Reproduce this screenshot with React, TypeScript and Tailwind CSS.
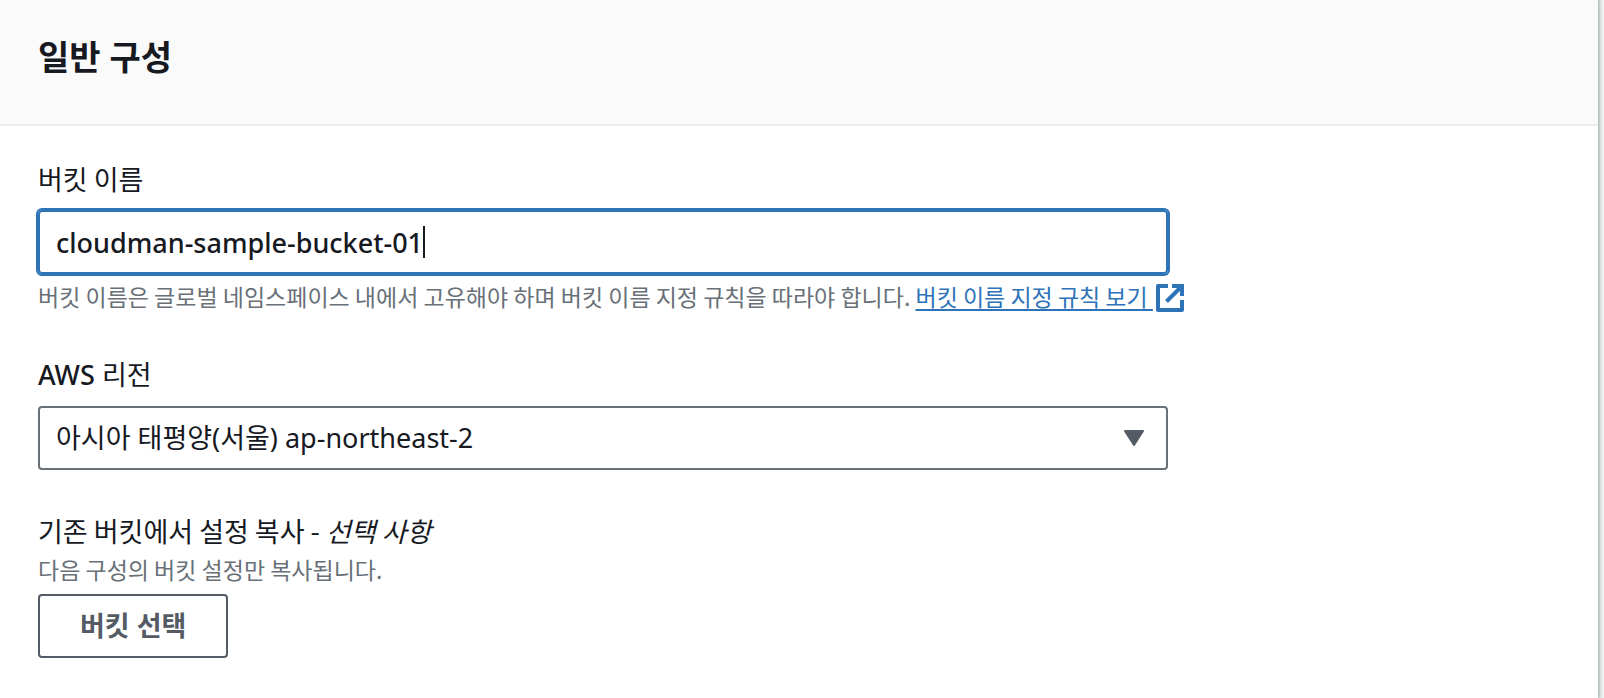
import { useState } from "react";

function ExternalIcon() {
  return (
    <svg
      className="ml-[3px] inline-block size-7 align-[-6px]"
      viewBox="0 0 28 28"
      fill="none"
      stroke="currentColor"
      strokeWidth="4"
      aria-hidden="true"
    >
      <path d="M12 2H2v24h24V16" strokeLinejoin="round" />
      <path d="M16 2h10v10" />
      <path d="M26 2L10.500 17.500" />
    </svg>
  );
}

export default function App() {
  const [name, setName] = useState("cloudman-sample-bucket-01");

  return (
    <div className="flex min-h-screen bg-[#f2f3f3] pr-1.5 font-['Noto_Sans','Noto_Sans_CJK_KR',sans-serif] text-[27px] leading-[42px] text-[#16191f]">
      <section className="flex-1 bg-white shadow-[1px_0_3px_1px_#aab7b8]">
        <header className="border-b-2 border-[#eaeded] bg-[#fafafa] px-[38px] pt-[33px] pb-[43px]">
          <h2 className="text-[34px] leading-[48px] font-bold">일반 구성</h2>
        </header>

        <form className="px-[38px] pt-8 pb-10" onSubmit={(e) => e.preventDefault()}>
          <div>
            <label htmlFor="bucket-name" className="block font-['Noto_Sans_CJK_KR',sans-serif]">
              버킷 이름
            </label>
            <div className="mt-2.5 flex h-16 max-w-[1130px] items-center rounded-sm border-2 border-[#2e73b8] px-4 ring-2 ring-[#2e73b8]">
              <input
                id="bucket-name"
                className="min-w-0 [field-sizing:content] bg-transparent pt-0.5 font-medium outline-none"
                value={name}
                onChange={(e) => setName(e.target.value)}
              />
              <span className="h-8 w-0.5 bg-[#16191f]" />
            </div>
            <p className="mt-[5px] font-['Noto_Sans_CJK_KR',sans-serif] text-[23px] leading-[34px] text-[#687078]">
              버킷 이름은 글로벌 네임스페이스 내에서 고유해야 하며 버킷 이름 지정 규칙을 따라야 합니다.{" "}
              <a href="#naming-rules" className="whitespace-nowrap text-[#2e73b8]">
                <span className="underline decoration-2 underline-offset-3">버킷 이름 지정 규칙 보기 </span>
                <ExternalIcon />
              </a>
            </p>
          </div>

          <div className="mt-[41px]">
            <label htmlFor="region" className="block">
              <span className="font-medium">AWS</span> 리전
            </label>
            <div className="relative mt-2.5 max-w-[1130px]">
              <select
                id="region"
                className="h-16 w-full appearance-none rounded-sm border-2 border-[#687078] bg-white px-4"
              >
                <option>아시아 태평양(서울) ap-northeast-2</option>
              </select>
              <svg
                className="pointer-events-none absolute top-6 right-6 h-4 w-5"
                viewBox="0 0 20 16"
                fill="#545b64"
                stroke="#545b64"
                strokeWidth="2"
                strokeLinejoin="round"
                aria-hidden="true"
              >
                <path d="M1 1h18L10 15z" />
              </svg>
            </div>
          </div>

          <div className="mt-10">
            <div id="copy-label" className="font-['Noto_Sans_CJK_KR',sans-serif]">
              기존 버킷에서 설정 복사 - <em>선택 사항</em>
            </div>
            <p className="font-['Noto_Sans_CJK_KR',sans-serif] text-[23px] leading-[34px] text-[#687078]">
              다음 구성의 버킷 설정만 복사됩니다.
            </p>
            <button
              type="button"
              aria-describedby="copy-label"
              className="mt-2 h-16 rounded-sm border-2 border-[#545b64] bg-white px-10 font-bold text-[#545b64]"
            >
              버킷 선택
            </button>
          </div>
        </form>
      </section>
    </div>
  );
}
